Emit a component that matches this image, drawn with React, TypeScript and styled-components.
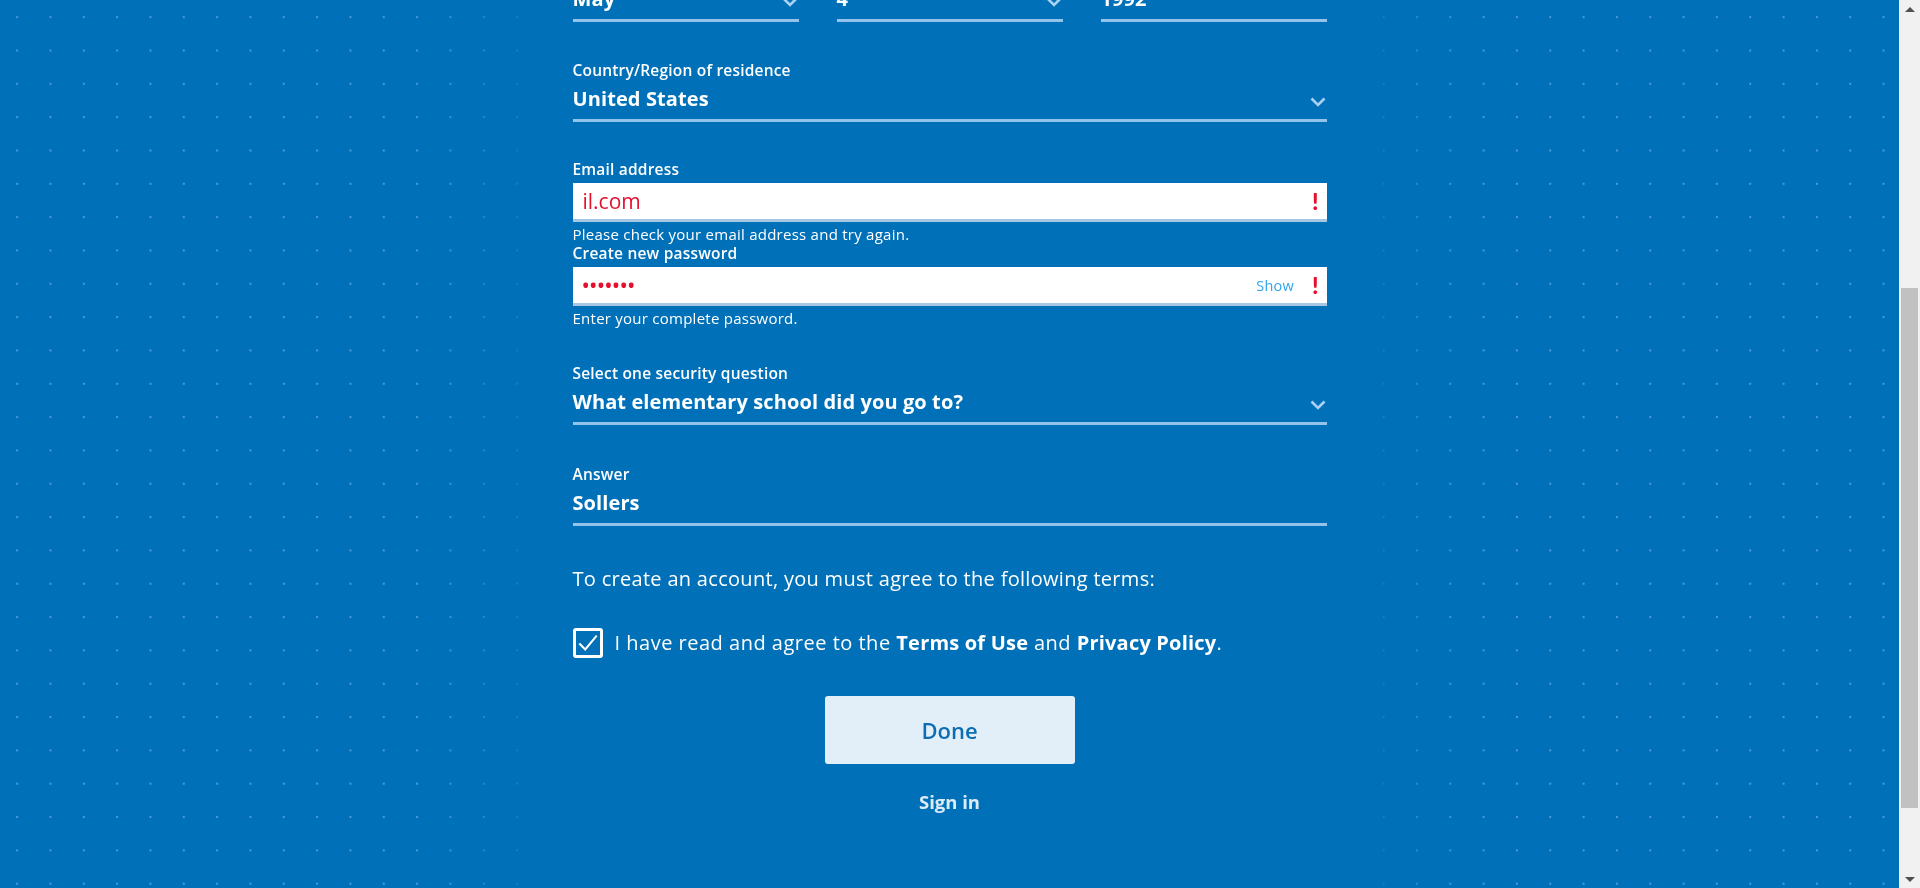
import { FC, ReactNode, useLayoutEffect } from "react";
import styled, { createGlobalStyle } from "styled-components";

const GlobalStyle = createGlobalStyle`
  html, body {
    margin: 0;
    padding: 0;
  }
  body {
    background-color: #0071b9;
    font-family: "Open Sans", Lato, sans-serif;
    color: #ffffff;
  }
`;

interface SpaceProps {
  $top?: number;
}

const Chevron: FC = () => (
  <ChevronIcon viewBox="0 0 16 10" aria-hidden>
    <path d="M1.5 1.5 L8 8 L14.5 1.5" />
  </ChevronIcon>
);

interface SelectProps {
  label?: string;
  value: string;
  top?: number;
}

const SelectField: FC<SelectProps> = ({ label, value, top }) => (
  <Field $top={top}>
    {label && <Label>{label}</Label>}
    <SelectRow>
      <Value>{value}</Value>
      <Chevron />
    </SelectRow>
  </Field>
);

interface TextProps {
  label?: string;
  value: string;
  top?: number;
}

const TextField: FC<TextProps> = ({ label, value, top }) => (
  <Field $top={top}>
    {label && <Label>{label}</Label>}
    <SelectRow>
      <Value>{value}</Value>
    </SelectRow>
  </Field>
);

interface ErrorProps {
  label: string;
  help: string;
  top?: number;
  children: ReactNode;
  action?: string;
}

const ErrorField: FC<ErrorProps> = ({ label, help, top, children, action }) => (
  <Field $top={top}>
    <Label>{label}</Label>
    <InputBox>
      {children}
      {action && <ShowLink>{action}</ShowLink>}
      <Bang>!</Bang>
    </InputBox>
    <Help>{help}</Help>
  </Field>
);

// browser scrollbar as it shows in the capture (headless hides the real one)
const Scrollbar: FC = () => (
  <ScrollTrack aria-hidden>
    <ArrowButton>
      <svg viewBox="0 0 10 6">
        <path d="M0 6 L5 1 L10 6 Z" />
      </svg>
    </ArrowButton>
    <ThumbLane>
      <Thumb />
    </ThumbLane>
    <ArrowButton>
      <svg viewBox="0 0 10 6">
        <path d="M0 0 L5 5 L10 0 Z" />
      </svg>
    </ArrowButton>
  </ScrollTrack>
);

const App: FC = () => {
  useLayoutEffect(() => {
    window.scrollTo(0, 458);
  }, []);

  return (
    <Page>
      <GlobalStyle />
      <Form>
        <Title>Create Your Account</Title>
        <Intro>Tell us a little about yourself to get started.</Intro>

        <Field $top={35}>
          <Label>Date of birth</Label>
          <DateRow>
            <SelectField value="May" />
            <SelectField value="4" />
            <TextField value="1992" />
          </DateRow>
        </Field>

        <SelectField
          label="Country/Region of residence"
          value="United States"
          top={39}
        />

        <ErrorField
          label="Email address"
          help="Please check your email address and try again."
          top={38}
        >
          <ErrorText>il.com</ErrorText>
        </ErrorField>

        <ErrorField
          label="Create new password"
          help="Enter your complete password."
          top={1}
          action="Show"
        >
          <Dots>•••••••</Dots>
        </ErrorField>

        <SelectField
          label="Select one security question"
          value="What elementary school did you go to?"
          top={37}
        />

        <TextField label="Answer" value="Sollers" top={40} />

        <Terms>To create an account, you must agree to the following terms:</Terms>

        <AgreeRow>
          <CheckBox>
            <svg viewBox="0 0 24 24" aria-hidden>
              <path d="M2.5 12.5 L9 19 L21.5 4" />
            </svg>
          </CheckBox>
          <AgreeText>
            I have read and agree to the <strong>Terms of Use</strong> and{" "}
            <strong>Privacy Policy</strong>.
          </AgreeText>
        </AgreeRow>

        <DoneButton type="button">Done</DoneButton>
        <SignIn>Sign in</SignIn>
      </Form>
      <Scrollbar />
    </Page>
  );
};

const Page = styled.div`
  position: relative;
  padding: 290px 21px 185px 0;

  &::before {
    content: "";
    position: fixed;
    top: 0;
    bottom: 0;
    left: 0;
    right: 21px;
    pointer-events: none;
    background-image: radial-gradient(
      circle,
      rgba(150, 200, 240, 0.5) 0.9px,
      transparent 1.4px
    );
    background-size: 33.33px 33.33px;
    background-position: 0.5px 0.5px;
    -webkit-mask-image: linear-gradient(
      to right,
      #000 0,
      #000 430px,
      transparent 555px,
      transparent calc(100% - 555px),
      #000 calc(100% - 430px)
    );
    mask-image: linear-gradient(
      to right,
      #000 0,
      #000 430px,
      transparent 555px,
      transparent calc(100% - 555px),
      #000 calc(100% - 430px)
    );
  }
`;

const Form = styled.form`
  position: relative;
  z-index: 1;
  display: flex;
  flex-direction: column;
  width: 754px;
  margin: 0 auto;
`;

const Title = styled.h1`
  margin: 0;
  font-size: 38px;
  line-height: 48px;
  font-weight: 400;
`;

const Intro = styled.p`
  margin: 20px 0 0;
  font-size: 18px;
  line-height: 26px;
`;

const Field = styled.div<SpaceProps>`
  display: flex;
  flex-direction: column;
  margin-top: ${(p) => p.$top ?? 0}px;
  min-width: 0;
`;

const Label = styled.label`
  font-size: 15.5px;
  line-height: 18px;
  font-weight: 600;
  letter-spacing: 0.2px;
  color: #ffffff;
  margin-bottom: 3px;
`;

const DateRow = styled.div`
  display: grid;
  grid-template-columns: repeat(3, 1fr);
  column-gap: 38px;
`;

const SelectRow = styled.div`
  display: flex;
  align-items: flex-start;
  justify-content: space-between;
  height: 34px;
  padding-top: 3px;
  border-bottom: 3px solid #92c3ea;
`;

const Value = styled.span`
  font-size: 20px;
  line-height: 28px;
  font-weight: 700;
  letter-spacing: 0.1px;
  color: #ffffff;
  white-space: nowrap;
`;

const ChevronIcon = styled.svg`
  flex: 0 0 16px;
  width: 16px;
  height: 10px;
  margin: 12px 1px 0 0;
  fill: none;
  stroke: #a9d2f2;
  stroke-width: 2.6;
`;

const InputBox = styled.div`
  display: flex;
  align-items: center;
  height: 36px;
  margin-top: 2px;
  padding: 0 8px 0 10px;
  background-color: #ffffff;
  border-bottom: 3px solid #a6c8e4;
`;

const ErrorText = styled.span`
  flex: 1;
  font-size: 21px;
  color: #e4102e;
`;

const Dots = styled.span`
  flex: 1;
  font-size: 17px;
  font-weight: 700;
  letter-spacing: 1.2px;
  color: #e4102e;
`;

const ShowLink = styled.span`
  font-size: 14.5px;
  letter-spacing: 0.2px;
  color: #2fa5ec;
  margin-right: 18px;
`;

const Bang = styled.span`
  font-family: Lato, sans-serif;
  font-size: 23px;
  font-weight: 900;
  color: #e4102e;
`;

const Help = styled.div`
  font-size: 15px;
  line-height: 18px;
  letter-spacing: 0.25px;
  margin-top: 3px;
  color: #ffffff;
`;

const Terms = styled.p`
  margin: 41px 0 0;
  font-size: 20px;
  line-height: 24px;
  font-weight: 400;
  letter-spacing: 0.3px;
`;

const AgreeRow = styled.div`
  display: flex;
  align-items: center;
  gap: 12px;
  margin-top: 37px;
`;

const CheckBox = styled.span`
  display: flex;
  align-items: center;
  justify-content: center;
  flex: 0 0 30px;
  width: 30px;
  height: 30px;
  box-sizing: border-box;
  border: 3px solid #ffffff;
  border-radius: 3px;

  svg {
    width: 22px;
    height: 22px;
    fill: none;
    stroke: #ffffff;
    stroke-width: 2.2;
  }
`;

const AgreeText = styled.span`
  font-size: 20px;
  line-height: 24px;
  letter-spacing: 0.5px;

  strong {
    font-weight: 700;
    letter-spacing: 0.2px;
  }
`;

const DoneButton = styled.button`
  align-self: center;
  width: 250px;
  height: 68px;
  margin-top: 38px;
  border: none;
  border-radius: 3px;
  background-color: #e3eff8;
  color: #0c6cb4;
  font-family: "Open Sans", Lato, sans-serif;
  font-size: 22px;
  font-weight: 600;
  cursor: pointer;
`;

const SignIn = styled.a`
  align-self: center;
  margin-top: 27px;
  font-size: 18.5px;
  line-height: 22px;
  font-weight: 700;
  color: #dcebf7;
  cursor: pointer;
`;

const ScrollTrack = styled.div`
  position: fixed;
  top: 0;
  right: 0;
  bottom: 0;
  z-index: 2;
  display: flex;
  flex-direction: column;
  width: 21px;
  background-color: #f1f1f1;
`;

const ArrowButton = styled.div`
  display: flex;
  align-items: center;
  justify-content: center;
  flex: 0 0 17px;

  svg {
    width: 10px;
    height: 6px;
    fill: #505050;
  }
`;

const ThumbLane = styled.div`
  flex: 1;
  padding: 271px 2px 0;
`;

const Thumb = styled.div`
  height: 520px;
  background-color: #c1c1c1;
`;

export default App;
